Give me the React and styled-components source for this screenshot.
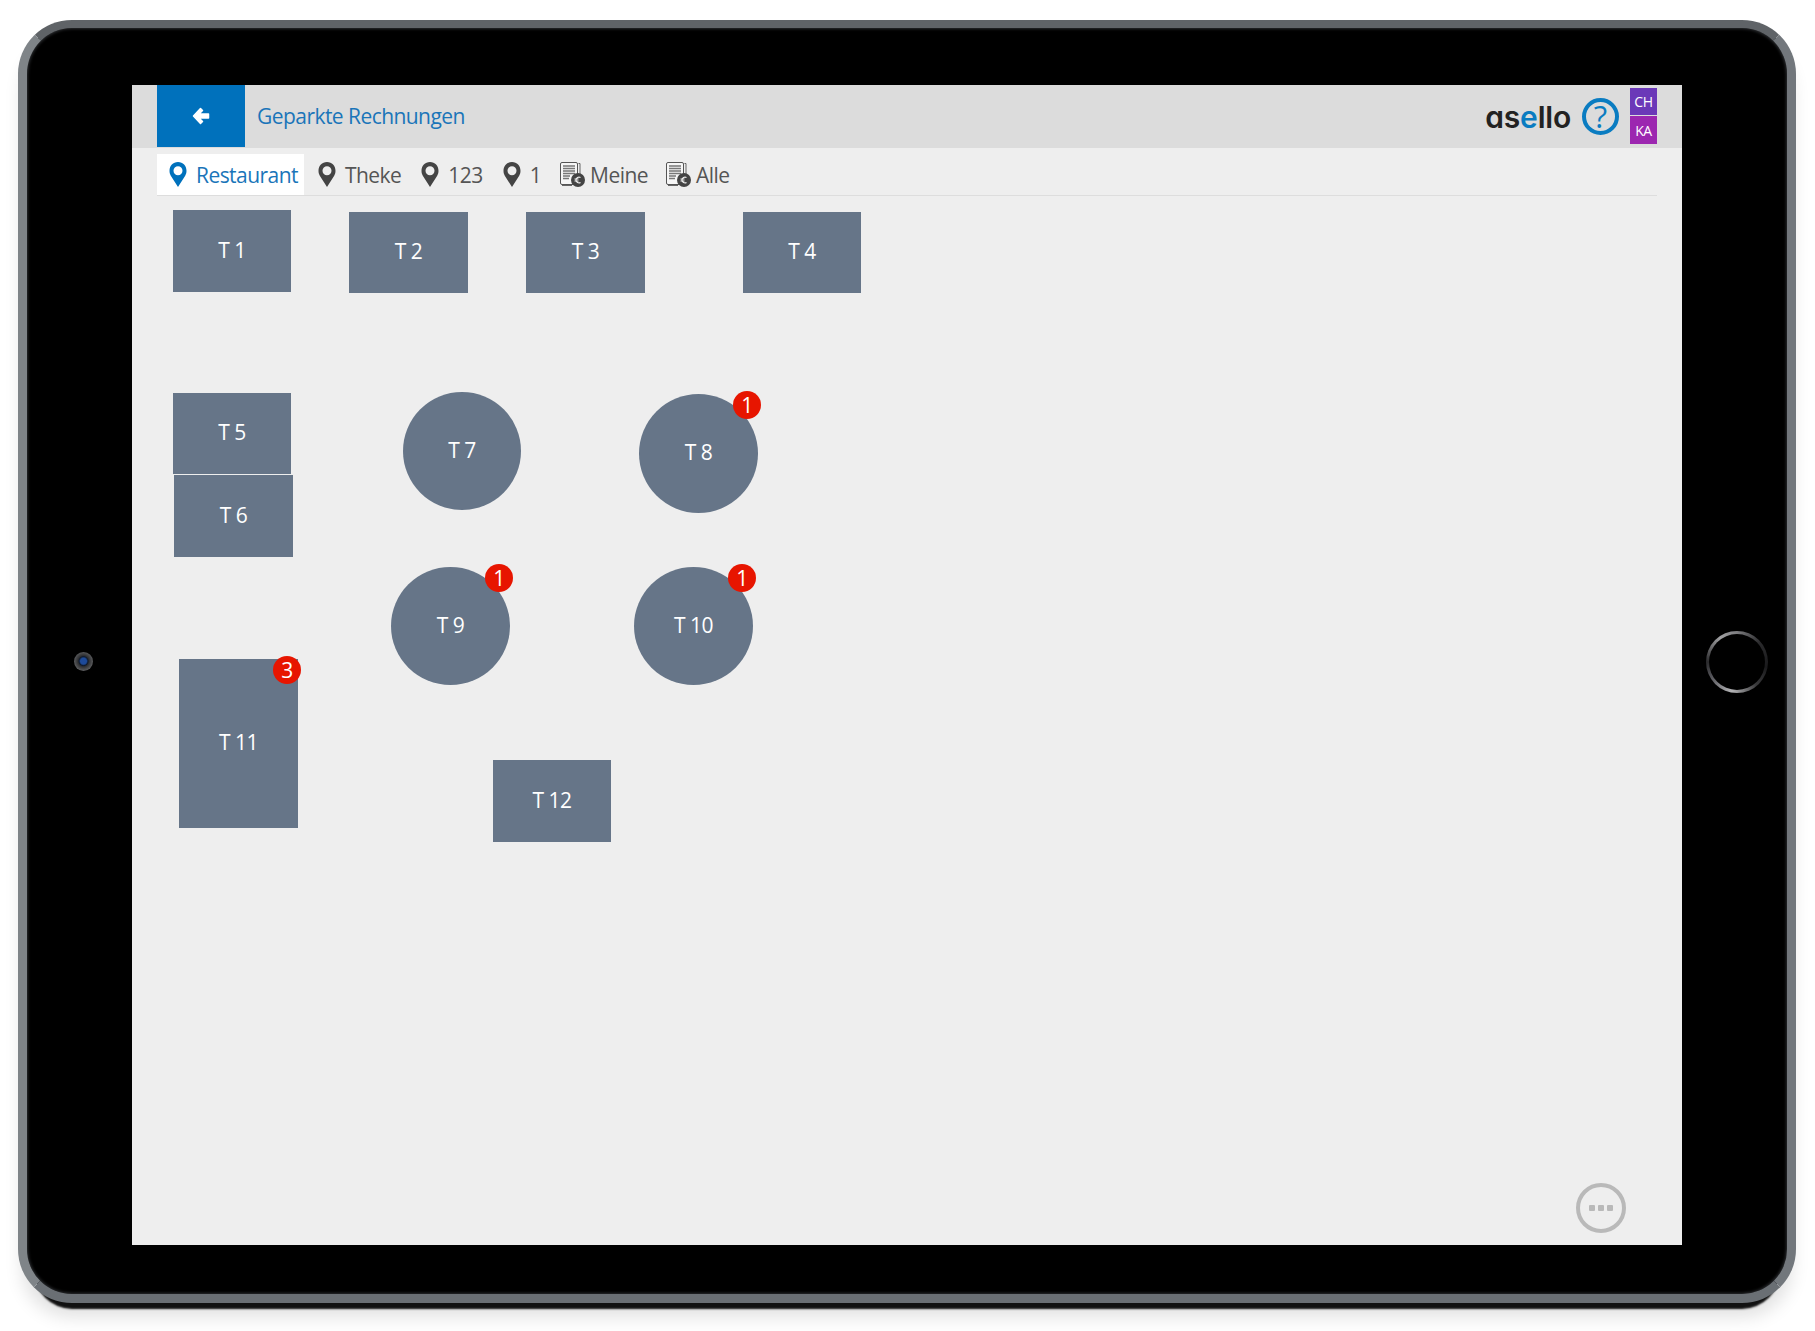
import React from 'react'
import styled, { createGlobalStyle } from 'styled-components'

const GlobalStyle = createGlobalStyle`
  html, body {
    margin: 0;
    padding: 0;
    background: #fff;
    font-family: "Open Sans", "Liberation Sans", sans-serif;
  }
`

const Page = styled.div`
  width: 1815px;
  height: 1331px;
  padding: 20px 0 0 18px;
  box-sizing: border-box;
  overflow: hidden;
  background: #fff;
`

const Tablet = styled.div`
  width: 1778px;
  height: 1283px;
  box-sizing: border-box;
  display: grid;
  grid-template-columns: 105px 1550px 105px;
  grid-template-rows: 57px 1160px 49px;
  border-style: solid;
  border-width: 8px 9px 9px 9px;
  border-color: #5f6367 #72777c #6a6f74 #7f8488;
  border-radius: 54px;
  background: #000;
  box-shadow:
    inset 0 0 3px 1px #2c2e31,
    0 22px 2px -16px #111,
    0 18px 18px -4px rgba(0, 0, 0, 0.12);
`

const LeftBezel = styled.div`
  grid-column: 1;
  grid-row: 2;
  display: flex;
  align-items: center;
  justify-content: center;
  padding: 0 0 8px 7px;
`

const RightBezel = styled.div`
  grid-column: 3;
  grid-row: 2;
  display: flex;
  align-items: center;
  justify-content: center;
  padding: 0 0 6px 5px;
`

const Camera = styled.div`
  width: 19px;
  height: 19px;
  border-radius: 50%;
  background: radial-gradient(circle at 50% 48%, #1d4a9a 0 3px, #0f1a2c 4.5px, #2e2f32 5.5px, #5a5b5d 9.5px);
`

const HomeButton = styled.div`
  width: 62px;
  height: 62px;
  box-sizing: border-box;
  border-radius: 50%;
  border: 3px solid transparent;
  filter: blur(0.5px);
  background:
    linear-gradient(#000, #000) padding-box,
    conic-gradient(#7d7d80 0deg, #2a2a2c 50deg, #1a1a1c 100deg, #3a3a3c 140deg, #b4b4b6 190deg, #55555a 240deg, #2a2a2c 270deg, #a0a0a2 325deg, #7d7d80 360deg) border-box;
`

const Screen = styled.div`
  grid-column: 2;
  grid-row: 2;
  position: relative;
  display: flex;
  flex-direction: column;
  background: #eee;
`

const Header = styled.header`
  height: 63px;
  flex: none;
  display: flex;
  align-items: flex-start;
  padding: 0 25px;
  background: #dcdcdc;
`

const BackButton = styled.button`
  width: 88px;
  height: 62px;
  border: 0;
  padding: 0;
  display: flex;
  align-items: center;
  justify-content: center;
  background: #0071bc;
`

const Title = styled.h1`
  margin: 0 auto 0 12px;
  line-height: 62px;
  font-size: 21px;
  letter-spacing: -0.55px;
  font-weight: 400;
  color: #1a75b9;
`

const Logo = styled.div`
  margin: 15px 11px 0 0;
  font-family: Inter, "Open Sans", sans-serif;
  font-feature-settings: "cv11";
  font-size: 30px;
  line-height: 34px;
  font-weight: 600;
  letter-spacing: -0.2px;
  color: #222;
  & b {
    font-weight: 600;
    color: #0a7cc1;
  }
`

const HelpCircle = styled.div`
  width: 37px;
  height: 37px;
  margin: 13px 11px 0 0;
  box-sizing: border-box;
  border: 4px solid #0a7cc1;
  border-radius: 50%;
  display: flex;
  align-items: center;
  justify-content: center;
  font-size: 31px;
  line-height: 29px;
  font-weight: 500;
  color: #0a7cc1;
`

const UserStack = styled.div`
  display: flex;
  flex-direction: column;
  gap: 1px;
  margin-top: 3px;
`

const UserBadge = styled.div`
  width: 27px;
  height: ${p => p.$h}px;
  display: flex;
  align-items: center;
  justify-content: center;
  background: ${p => p.$color};
  color: #fff;
  font-size: 14px;
  letter-spacing: -0.4px;
`

const TabBar = styled.nav`
  flex: none;
  height: 41px;
  margin: 6px 25px 0;
  display: flex;
  gap: 2px;
  border-bottom: 1px solid #ddd;
`

const Tab = styled.div`
  display: flex;
  align-items: center;
  gap: ${p => (p.$doc ? 5 : 9)}px;
  padding: 0 ${p => (p.$doc ? 5 : 6)}px 0 ${p => (p.$doc ? 11 : 12)}px;
  background: ${p => (p.$active ? '#fff' : 'transparent')};
  color: ${p => (p.$active ? '#1a75b9' : '#555')};
  font-size: 21px;
  letter-spacing: -0.55px;
`

const Canvas = styled.div`
  position: relative;
  flex: 1;
`

const Table = styled.div`
  position: absolute;
  box-sizing: border-box;
  padding-bottom: 3px;
  display: flex;
  align-items: center;
  justify-content: center;
  background: #667588;
  color: #fff;
  font-size: 21px;
  letter-spacing: -0.5px;
  border-radius: ${p => (p.$round ? '50%' : '0')};
`

const Count = styled.span`
  position: absolute;
  top: -3px;
  right: -3px;
  width: 28px;
  height: 28px;
  border-radius: 50%;
  display: flex;
  align-items: center;
  justify-content: center;
  background: #e71500;
  color: #fff;
  font-size: 21px;
`

const MoreButton = styled.div`
  position: absolute;
  right: 56px;
  bottom: 12px;
  width: 50px;
  height: 50px;
  box-sizing: border-box;
  border: 4px solid #b9b9b9;
  border-radius: 50%;
  display: flex;
  align-items: center;
  justify-content: center;
  gap: 3px;
`

const Dot = styled.i`
  width: 6px;
  height: 6px;
  border-radius: 1px;
  background: #b9b9b9;
`

const BackArrow = () => (
  <svg width="18" height="18" viewBox="0 0 18 18">
    <path
      fill="#fff"
      stroke="#fff"
      strokeLinejoin="round"
      strokeWidth="1.500"
      d="M8.500 1.500L1.500 9l7 7.500 2-2L7 11h9.500V7H7l3.500-3.500z"
    />
  </svg>
)

const Pin = ({ color }) => (
  <svg width="18" height="25" viewBox="0 0 18 25">
    <path
      fill={color}
      fillRule="evenodd"
      d="M9 0C4 0 .5 3.800.5 8.800c0 2 .5 3.400 1.300 5L9 25l7.200-11.200c.8-1.600 1.300-3 1.300-5C17.500 3.800 14 0 9 0zm0 4.300a4.500 4.500 0 1 1 0 9 4.500 4.500 0 0 1 0-9z"
    />
  </svg>
)

const DocIcon = () => (
  <svg width="25" height="25" viewBox="0 0 25 25">
    <path d="M18.500 1.500h1.500V16M2 23.500h10" fill="none" stroke="#666" strokeWidth="1" />
    <rect x="0.500" y="0.500" width="17" height="22" rx="1.500" fill="#f6f6f6" stroke="#555" />
    <path d="M3 4h12M3 6.500h12M3 9h12M3 11.500h12M3 14h7M3 16.500h6" stroke="#777" strokeWidth="1.400" />
    <circle cx="18" cy="18" r="7" fill="#444" />
    <path d="M20.500 15.500a3 3 0 0 0-4.500 2.500 3 3 0 0 0 4.500 2.500M14.500 17h4M14.500 19h4" fill="none" stroke="#eee" strokeWidth="1.200" />
  </svg>
)

const tabs = [
  { label: 'Restaurant', active: true },
  { label: 'Theke' },
  { label: '123' },
  { label: '1' },
  { label: 'Meine', doc: true },
  { label: 'Alle', doc: true },
]

// positions are screen pixels on the floor plan, canvas starts at 132,196
const tables = [
  { name: 'T 1', x: 41, y: 14, w: 118, h: 82 },
  { name: 'T 2', x: 217, y: 16, w: 119, h: 81 },
  { name: 'T 3', x: 394, y: 16, w: 119, h: 81 },
  { name: 'T 4', x: 611, y: 16, w: 118, h: 81 },
  { name: 'T 5', x: 41, y: 197, w: 118, h: 81 },
  { name: 'T 6', x: 42, y: 279, w: 119, h: 82 },
  { name: 'T 7', x: 271, y: 196, w: 118, h: 118, round: true },
  { name: 'T 8', x: 507, y: 198, w: 119, h: 119, round: true, count: 1 },
  { name: 'T 9', x: 259, y: 371, w: 119, h: 118, round: true, count: 1 },
  { name: 'T 10', x: 502, y: 371, w: 119, h: 118, round: true, count: 1 },
  { name: 'T 11', x: 47, y: 463, w: 119, h: 169, count: 3 },
  { name: 'T 12', x: 361, y: 564, w: 118, h: 82 },
]

export default function App() {
  return (
    <Page>
      <GlobalStyle />
      <Tablet>
        <LeftBezel>
          <Camera />
        </LeftBezel>
        <Screen>
          <Header>
            <BackButton>
              <BackArrow />
            </BackButton>
            <Title>Geparkte Rechnungen</Title>
            <Logo>
              as<b>e</b>llo
            </Logo>
            <HelpCircle>?</HelpCircle>
            <UserStack>
              <UserBadge $h={27} $color="#6b38b8">CH</UserBadge>
              <UserBadge $h={28} $color="#9c27b0">KA</UserBadge>
            </UserStack>
          </Header>
          <TabBar>
            {tabs.map(t => (
              <Tab key={t.label} $active={t.active} $doc={t.doc}>
                {t.doc ? <DocIcon /> : <Pin color={t.active ? '#0071bc' : '#444'} />}
                {t.label}
              </Tab>
            ))}
          </TabBar>
          <Canvas>
            {tables.map(t => (
              <Table
                key={t.name}
                $round={t.round}
                style={{ left: t.x, top: t.y, width: t.w, height: t.h }}
              >
                {t.name}
                {t.count && <Count>{t.count}</Count>}
              </Table>
            ))}
          </Canvas>
          <MoreButton>
            <Dot />
            <Dot />
            <Dot />
          </MoreButton>
        </Screen>
        <RightBezel>
          <HomeButton />
        </RightBezel>
      </Tablet>
    </Page>
  )
}
